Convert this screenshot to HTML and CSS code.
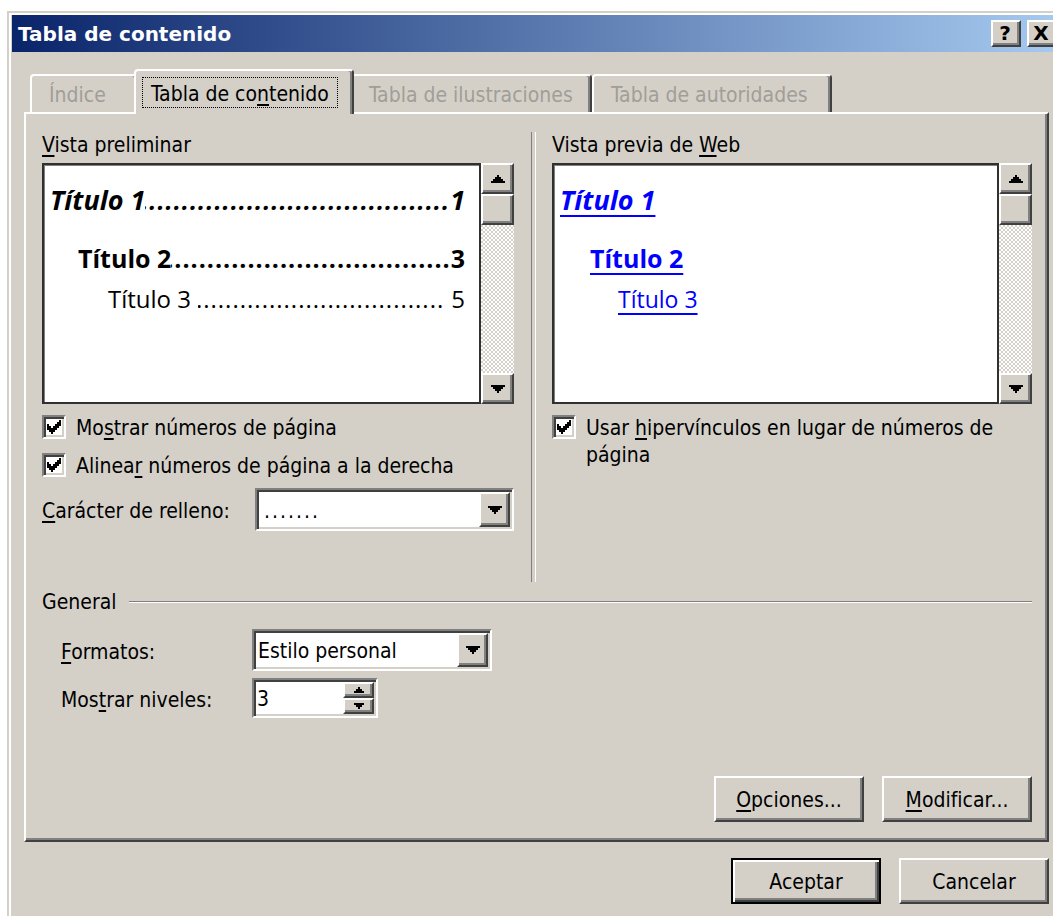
FILE: index.html
```html
<!DOCTYPE html>
<html lang="es">
<head>
<meta charset="utf-8">
<title>Tabla de contenido</title>
<link rel="stylesheet" href="styles.css">
</head>
<body>
<div class="window">
  <div class="titlebar">
    <span class="title">Tabla de contenido</span>
    <div class="caption-buttons">
      <span class="caption-btn raised">?</span>
      <span class="caption-btn raised">X</span>
    </div>
  </div>

  <div class="dialog">
    <div class="tabs">
      <div class="tab tab-index">Índice</div>
      <div class="tab tab-active"><span class="focus">Tabla de co<u>n</u>tenido</span></div>
      <div class="tab tab-figures">Tabla de ilustraciones</div>
      <div class="tab tab-authorities">Tabla de autoridades</div>
    </div>

    <div class="panel">
      <div class="columns">
        <div class="col col-print">
          <div class="label"><u>V</u>ista preliminar</div>
          <div class="preview">
            <div class="preview-page">
              <div class="toc-entry toc-1"><span>Título 1</span><span class="leader">..........................................</span><span>1</span></div>
              <div class="toc-entry toc-2"><span>Título 2</span><span class="leader">..........................................</span><span>3</span></div>
              <div class="toc-entry toc-3"><span>Título 3</span><span class="leader">...........................................</span><span>5</span></div>
            </div>
            <div class="scrollbar">
              <div class="sb-btn raised"><svg class="arrow" viewBox="0 0 7 4"><path d="M3 0h1v1h1v1h1v1h1v1H0V3h1V2h1V1h1z"/></svg></div>
              <div class="sb-thumb raised"></div>
              <div class="sb-track"></div>
              <div class="sb-btn raised"><svg class="arrow" viewBox="0 0 7 4"><path d="M0 0h7v1H6v1H5v1H4v1H3V3H2V2H1V1H0z"/></svg></div>
            </div>
          </div>

          <div class="check check-first">
            <span class="cb sunken"><svg class="tick" viewBox="0 0 7 7"><path d="M6 0h1v1h-1zM5 1h2v1h-2zM0 2h1v1h-1zM4 2h3v1h-3zM0 3h2v1h-2zM3 3h3v1h-3zM0 4h5v1h-5zM1 5h3v1h-3zM2 6h1v1h-1z"/></svg></span>
            <span class="check-text">Mo<u>s</u>trar números de página</span>
          </div>
          <div class="check check-second">
            <span class="cb sunken"><svg class="tick" viewBox="0 0 7 7"><path d="M6 0h1v1h-1zM5 1h2v1h-2zM0 2h1v1h-1zM4 2h3v1h-3zM0 3h2v1h-2zM3 3h3v1h-3zM0 4h5v1h-5zM1 5h3v1h-3zM2 6h1v1h-1z"/></svg></span>
            <span class="check-text">Alinea<u>r</u> números de página a la derecha</span>
          </div>

          <div class="fill-row">
            <span class="row-label"><u>C</u>arácter de relleno:</span>
            <div class="combo combo-fill sunken">
              <span class="combo-text combo-dots">.......</span>
              <span class="combo-btn raised"><svg class="arrow" viewBox="0 0 7 4"><path d="M0 0h7v1H6v1H5v1H4v1H3V3H2V2H1V1H0z"/></svg></span>
            </div>
          </div>
        </div>

        <div class="separator"></div>

        <div class="col col-web">
          <div class="label">Vista previa de <u>W</u>eb</div>
          <div class="preview">
            <div class="preview-page preview-web">
              <div class="web-entry web-1"><a href="#">Título 1</a></div>
              <div class="web-entry web-2"><a href="#">Título 2</a></div>
              <div class="web-entry web-3"><a href="#">Título 3</a></div>
            </div>
            <div class="scrollbar">
              <div class="sb-btn raised"><svg class="arrow" viewBox="0 0 7 4"><path d="M3 0h1v1h1v1h1v1h1v1H0V3h1V2h1V1h1z"/></svg></div>
              <div class="sb-thumb raised"></div>
              <div class="sb-track"></div>
              <div class="sb-btn raised"><svg class="arrow" viewBox="0 0 7 4"><path d="M0 0h7v1H6v1H5v1H4v1H3V3H2V2H1V1H0z"/></svg></div>
            </div>
          </div>

          <div class="check check-wrap">
            <span class="cb sunken"><svg class="tick" viewBox="0 0 7 7"><path d="M6 0h1v1h-1zM5 1h2v1h-2zM0 2h1v1h-1zM4 2h3v1h-3zM0 3h2v1h-2zM3 3h3v1h-3zM0 4h5v1h-5zM1 5h3v1h-3zM2 6h1v1h-1z"/></svg></span>
            <span class="check-text">Usar <u>h</u>ipervínculos en lugar de números de página</span>
          </div>
        </div>
      </div>

      <div class="group-head">
        <span class="row-label">General</span>
        <span class="group-line"></span>
      </div>
      <div class="fields">
        <span class="row-label"><u>F</u>ormatos:</span>
        <div class="combo combo-format sunken">
          <span class="combo-text">Estilo personal</span>
          <span class="combo-btn raised"><svg class="arrow" viewBox="0 0 7 4"><path d="M0 0h7v1H6v1H5v1H4v1H3V3H2V2H1V1H0z"/></svg></span>
        </div>
        <span class="row-label">Mos<u>t</u>rar niveles:</span>
        <div class="spin sunken">
          <span class="spin-text">3</span>
          <span class="spin-btns">
            <span class="spin-btn raised"><svg class="arrow-sm" viewBox="0 0 5 3"><path d="M2 0h1v1h1v1h1v1H0V2h1V1h1z"/></svg></span>
            <span class="spin-btn raised"><svg class="arrow-sm" viewBox="0 0 5 3"><path d="M0 0h5v1H4v1H3v1H2V2H1V1H0z"/></svg></span>
          </span>
        </div>
      </div>

      <div class="panel-buttons">
        <span class="btn raised"><span><u>O</u>pciones...</span></span>
        <span class="btn raised"><span><u>M</u>odificar...</span></span>
      </div>
    </div>

    <div class="dialog-buttons">
      <span class="btn btn-default">Aceptar</span>
      <span class="btn raised">Cancelar</span>
    </div>
  </div>
</div>
</body>
</html>
```

FILE: styles.css
```css
* {
  box-sizing: border-box;
}

html,
body {
  margin: 0;
  overflow: hidden;
}

body {
  background: #fff;
  color: #000;
  font-family: "DejaVu Sans Condensed", "DejaVu Sans", sans-serif;
  font-stretch: semi-condensed;
  font-size: 21px;
  line-height: 25px;
}

u {
  text-decoration-thickness: 2px;
  text-underline-offset: 3px;
}

/* classic 3D edges */
.raised {
  background: #d4d0c8;
  border: 2px solid;
  border-color: #fff #404040 #404040 #fff;
  box-shadow: inset -2px -2px #808080;
}

.sunken {
  background: #fff;
  border: 2px solid;
  border-color: #808080 #fff #fff #808080;
  box-shadow: inset 2px 2px #404040, inset -2px -2px #d4d0c8;
}

/* window frame */
.window {
  width: 1059px;
  margin: 11px 0 0 7px;
  padding: 2px 3px 3px;
  background: #d4d0c8;
  border: 2px solid;
  border-color: #d4d0c8 #404040 #404040 #d4d0c8;
  box-shadow: inset 2px 2px #fff, inset -2px -2px #808080;
}

.titlebar {
  height: 37px;
  display: flex;
  align-items: center;
  justify-content: space-between;
  padding: 0 4px 0 6px;
  background: linear-gradient(to right, #0a246a, #a6caf0);
}

.title {
  color: #fff;
  font-family: "DejaVu Sans", sans-serif;
  font-stretch: normal;
  font-weight: bold;
  font-size: 20px;
  padding-top: 2px;
}

.caption-buttons {
  display: flex;
  gap: 6px;
}

.caption-btn {
  width: 30px;
  height: 27px;
  display: flex;
  align-items: center;
  justify-content: center;
  font-family: "DejaVu Sans", sans-serif;
  font-stretch: normal;
  font-weight: bold;
  font-size: 20px;
  line-height: 1;
  padding: 0 2px 2px 0;
}

/* dialog body */
.dialog {
  padding: 17px 12px 14px;
}

.tabs {
  display: flex;
  align-items: flex-end;
  height: 43px;
  padding-left: 6px;
}

.tab {
  height: 38px;
  padding: 7px 0 0 17px;
  color: #a19e97;
  white-space: nowrap;
  background: #d4d0c8;
  border-top: 2px solid #fff;
  border-left: 2px solid #fff;
  border-right: 2px solid #404040;
  border-radius: 4px 4px 0 0;
  box-shadow: inset -2px 0 #808080;
}

.tab-index {
  width: 108px;
}

.tab-active {
  position: relative;
  z-index: 1;
  width: 220px;
  height: 45px;
  margin: 0 -4px -2px;
  padding: 6px 0 0 6px;
  color: #000;
}

.tab-figures {
  width: 242px;
}

.tab-authorities {
  width: 240px;
}

.focus {
  display: inline-block;
  padding: 4px 8px 0;
  border: 1px dotted #000;
}

.panel {
  background: #d4d0c8;
  border: 2px solid;
  border-color: #fff #404040 #404040 #fff;
  box-shadow: inset -2px -2px #808080;
  padding: 18px 15px 18px 16px;
}

.columns {
  display: flex;
  height: 450px;
}

.col-print {
  width: 472px;
}

.col-web {
  flex: 1;
}

.separator {
  width: 5px;
  margin: 0 16px 0 17px;
  border-left: 1px solid #808080;
  border-right: 1px solid #fff;
}

.label {
  margin-top: 1px;
}

.preview {
  display: flex;
  height: 241px;
  margin-top: 5px;
}

.preview-page {
  flex: 1;
  min-width: 0;
  background: #fff;
  border: 2px solid #303030;
  box-shadow: inset 1px 1px #808080;
  padding: 0 14px 0 6px;
  font-family: "Open Sans", "Noto Sans", sans-serif;
  font-stretch: normal;
  font-size: 25px;
  line-height: 30px;
}

.preview-web {
  padding-left: 4px;
}

.toc-entry {
  display: flex;
  align-items: baseline;
  white-space: nowrap;
}

/* dot leader: clipped from the left so the dots always meet the page number */
.leader {
  flex: 1;
  min-width: 0;
  overflow: hidden;
  direction: rtl;
  letter-spacing: 1px;
}

.toc-1 {
  margin-top: 20px;
  font-weight: bold;
  font-style: italic;
  font-size: 27px;
}

.toc-1 .leader {
  font-size: 25px;
}

.toc-2 {
  margin-top: 28px;
  padding-left: 28px;
  font-weight: bold;
}

.toc-3 {
  margin-top: 11px;
  padding-left: 58px;
  font-size: 24px;
}

.toc-3 .leader {
  margin: 0 7px 0 7px;
}

.web-entry a {
  color: #0000ff;
  text-decoration: underline;
  text-decoration-thickness: 2px;
  text-underline-offset: 5px;
}

.web-1 {
  margin-top: 20px;
  padding-left: 2px;
  font-weight: bold;
  font-style: italic;
  font-size: 27px;
}

.web-2 {
  margin-top: 28px;
  padding-left: 32px;
  font-weight: bold;
}

.web-3 {
  margin-top: 11px;
  padding-left: 60px;
  font-size: 23px;
}

/* scrollbars */
.scrollbar {
  width: 33px;
  flex: none;
  display: flex;
  flex-direction: column;
  background-color: #fff;
  background-image: conic-gradient(#d4d0c8 25%, #fff 0 50%, #d4d0c8 0 75%, #fff 0);
  background-size: 4px 4px;
}

.sb-btn,
.sb-thumb {
  height: 31px;
  flex: none;
  display: flex;
  align-items: center;
  justify-content: center;
}

.sb-track {
  flex: 1;
}

.arrow {
  width: 14px;
  height: 8px;
  fill: #000;
  shape-rendering: crispEdges;
}

.arrow-sm {
  width: 10px;
  height: 6px;
  fill: #000;
  shape-rendering: crispEdges;
}

/* checkboxes */
.check {
  display: flex;
  align-items: flex-start;
  gap: 10px;
}

.check .cb {
  margin-top: 1px;
}

.check-text {
  padding-top: 2px;
}

.check-first {
  margin-top: 10px;
}

.check-second {
  margin-top: 11px;
}

.check-wrap {
  margin-top: 10px;
  line-height: 27px;
}

.check-wrap .check-text {
  padding-top: 1px;
}

.cb {
  width: 24px;
  height: 24px;
  flex: none;
  display: flex;
  align-items: center;
  justify-content: center;
}

.tick {
  width: 14px;
  height: 14px;
  fill: #000;
  shape-rendering: crispEdges;
}

/* labels beside fields sit a little low, as on the dialog font */
.row-label {
  padding-top: 4px;
}

/* combo boxes and spin box */
.fill-row {
  display: flex;
  align-items: center;
  justify-content: space-between;
  margin-top: 9px;
}

.combo {
  display: flex;
  padding: 2px;
}

.combo-fill {
  width: 259px;
  height: 43px;
}

.combo-format {
  width: 240px;
  height: 42px;
}

.combo-text {
  flex: 1;
  display: flex;
  align-items: center;
  padding: 3px 0 0 2px;
  white-space: nowrap;
}

.combo-dots {
  padding-left: 5px;
  letter-spacing: 2px;
}

.combo-btn {
  width: 31px;
  flex: none;
  display: flex;
  align-items: center;
  justify-content: center;
}

.spin {
  display: flex;
  width: 126px;
  height: 40px;
  padding: 2px;
}

.spin-text {
  flex: 1;
  display: flex;
  align-items: center;
  padding: 3px 0 0 1px;
}

.spin-btns {
  width: 31px;
  display: flex;
  flex-direction: column;
}

.spin-btn {
  flex: 1;
  display: flex;
  align-items: center;
  justify-content: center;
}

/* General group */
.group-head {
  display: flex;
  align-items: center;
  gap: 13px;
  margin-top: 4px;
}

.group-line {
  flex: 1;
  height: 2px;
  margin-top: 2px;
  border-top: 1px solid #808080;
  border-bottom: 1px solid #fff;
}

.fields {
  display: grid;
  grid-template-columns: 191px auto;
  justify-content: start;
  align-items: center;
  row-gap: 7px;
  margin: 14px 0 0 19px;
}

/* push buttons */
.btn {
  width: 150px;
  height: 46px;
  display: flex;
  align-items: center;
  justify-content: center;
  padding-top: 2px;
}

.btn-default {
  background: #d4d0c8;
  border: 2px solid #000;
  box-shadow: inset 2px 2px #fff, inset -2px -2px #404040, inset -4px -4px #808080;
}

.panel-buttons {
  display: flex;
  justify-content: flex-end;
  gap: 18px;
  margin-top: 58px;
}

.dialog-buttons {
  display: flex;
  justify-content: flex-end;
  gap: 18px;
  margin-top: 16px;
}
```
